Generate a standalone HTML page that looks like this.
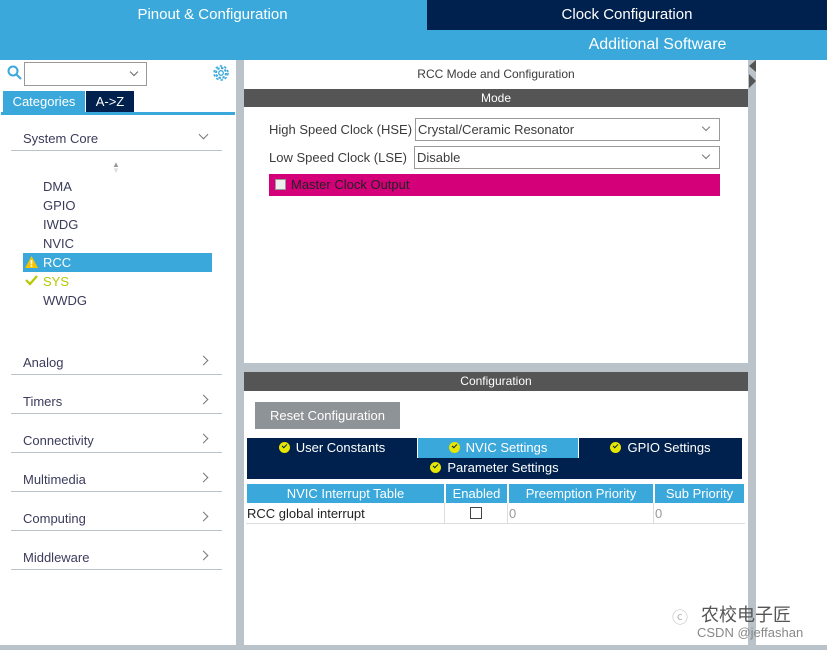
<!DOCTYPE html><html><head><style>
*{margin:0;padding:0;box-sizing:border-box}
body{width:827px;height:650px;position:relative;overflow:hidden;background:#b9c3c9;font-family:"Liberation Sans",sans-serif;font-size:13px;color:#3c3c3c}
.a{position:absolute}
.t{color:#fff;font-size:15px;text-align:center}
.cat{position:absolute;left:11px;width:211px;height:1px;background:#b9c3c9}
.cl{position:absolute;left:23px;font-size:13px;color:#3b3b5b}
.ch{position:absolute;left:200px;width:7px;height:7px;border-right:1px solid #777;border-bottom:1px solid #777;transform:rotate(-45deg)}
.it{position:absolute;left:43px;font-size:13px;color:#3b3b5b}
.tab{position:absolute;height:20px;background:#00214d;color:#fff;font-size:13px;text-align:center;line-height:20px}
.ok{display:inline-block;width:11px;height:11px;border-radius:50%;background:#e6e600;vertical-align:-1px;margin-right:6px;position:relative}
.ok:after{content:"";position:absolute;left:3px;top:2px;width:4px;height:2px;border-left:1.5px solid #00214d;border-bottom:1.5px solid #00214d;transform:rotate(-45deg)}
.th{position:absolute;top:484px;height:19px;background:#3aa8db;color:#fff;text-align:center;line-height:19px;font-size:13px}
</style></head><body>
<div class="a" style="left:0;top:0;width:827px;height:60px;background:#3aa8db"></div>
<div class="a t" style="left:0;top:6px;width:425px">Pinout &amp; Configuration</div>
<div class="a t" style="left:427px;top:0;width:400px;height:30px;background:#00214d;line-height:30px">Clock Configuration</div>
<div class="a t" style="left:560px;top:36px;width:195px;font-size:16px">Additional Software</div>
<div class="a" style="left:0;top:60px;width:236px;height:585px;background:#fff"></div>
<svg class="a" style="left:7px;top:65px" width="16" height="16"><circle cx="6" cy="6" r="4.5" fill="none" stroke="#3aa8db" stroke-width="2"/><path d="M9 9l5 5" stroke="#3aa8db" stroke-width="2"/></svg>
<div class="a" style="left:24px;top:62px;width:123px;height:24px;border:1px solid #999"></div>
<div class="a" style="left:131px;top:69px;width:6px;height:6px;border-right:1px solid #666;border-bottom:1px solid #666;transform:rotate(45deg)"></div>
<svg class="a" style="left:212px;top:64px" width="18" height="18"><circle cx="9" cy="9" r="5" fill="none" stroke="#3aa8db" stroke-width="2" stroke-dasharray="2.5 1.4"/><circle cx="9" cy="9" r="7" fill="none" stroke="#3aa8db" stroke-width="1.5" stroke-dasharray="2.5 2"/><circle cx="9" cy="9" r="2.3" fill="none" stroke="#3aa8db" stroke-width="1.3"/></svg>
<div class="a" style="left:3px;top:91px;width:82px;height:21px;background:#3aa8db;color:#fff;line-height:21px;text-align:center">Categories</div>
<div class="a" style="left:86px;top:91px;width:48px;height:21px;background:#00214d;color:#fff;line-height:21px;text-align:center">A-&gt;Z</div>
<div class="a" style="left:1px;top:112px;width:234px;height:3px;background:#3aa8db"></div>
<div class="cl" style="top:131px">System Core</div><div class="ch" style="top:131px;transform:rotate(45deg)"></div><div class="cat" style="top:150px"></div>
<div class="a" style="left:112px;top:162px;color:#999;font-size:8px;line-height:6px">▲<br><span style="color:#ddd">▼</span></div>
<div class="it" style="top:179px">DMA</div><div class="it" style="top:198px">GPIO</div><div class="it" style="top:217px">IWDG</div><div class="it" style="top:236px">NVIC</div>
<div class="a" style="left:23px;top:253px;width:189px;height:19px;background:#3aa8db"></div>
<svg class="a" style="left:24px;top:255px" width="15" height="14"><path d="M7.5 1L14 13H1z" fill="#f5c400"/><rect x="6.7" y="5" width="1.6" height="4.5" fill="#fff"/><rect x="6.7" y="10.3" width="1.6" height="1.6" fill="#fff"/></svg>
<div class="it" style="top:255px;color:#fff">RCC</div>
<svg class="a" style="left:25px;top:275px" width="13" height="11"><path d="M1 5l4 4 7-8" stroke="#b5c800" stroke-width="2.2" fill="none"/></svg>
<div class="it" style="top:274px;color:#b5c800">SYS</div><div class="it" style="top:293px">WWDG</div>
<div class="cl" style="top:355px">Analog</div><div class="ch" style="top:357px"></div><div class="cat" style="top:374px"></div>
<div class="cl" style="top:394px">Timers</div><div class="ch" style="top:396px"></div><div class="cat" style="top:413px"></div>
<div class="cl" style="top:433px">Connectivity</div><div class="ch" style="top:435px"></div><div class="cat" style="top:452px"></div>
<div class="cl" style="top:472px">Multimedia</div><div class="ch" style="top:474px"></div><div class="cat" style="top:491px"></div>
<div class="cl" style="top:511px">Computing</div><div class="ch" style="top:513px"></div><div class="cat" style="top:530px"></div>
<div class="cl" style="top:550px">Middleware</div><div class="ch" style="top:552px"></div><div class="cat" style="top:569px"></div>
<div class="a" style="left:244px;top:60px;width:504px;height:303px;background:#fff"></div>
<div class="a" style="left:244px;top:67px;width:504px;text-align:center;font-size:12px">RCC Mode and Configuration</div>
<div class="a" style="left:244px;top:89px;width:504px;height:18px;background:#545554;color:#fff;text-align:center;line-height:18px;font-size:12px">Mode</div>
<div class="a" style="left:269px;top:122px">High Speed Clock (HSE)</div>
<div class="a" style="left:415px;top:118px;width:305px;height:23px;border:1px solid #999;padding:3px 2px">Crystal/Ceramic Resonator</div>
<div class="a" style="left:269px;top:150px">Low Speed Clock (LSE)</div>
<div class="a" style="left:414px;top:146px;width:306px;height:23px;border:1px solid #999;padding:3px 2px">Disable</div>
<div class="a" style="left:703px;top:124px;width:6px;height:6px;border-right:1px solid #777;border-bottom:1px solid #777;transform:rotate(45deg)"></div>
<div class="a" style="left:703px;top:152px;width:6px;height:6px;border-right:1px solid #777;border-bottom:1px solid #777;transform:rotate(45deg)"></div>
<div class="a" style="left:269px;top:174px;width:451px;height:22px;background:#d4007a;padding:3px 0 0 6px;color:#222"><span style="display:inline-block;width:11px;height:11px;background:#eee;border:1px solid #999;vertical-align:-1px;margin-right:5px"></span>Master Clock Output</div>
<div class="a" style="left:756px;top:60px;width:71px;height:585px;background:#fff"></div>
<svg class="a" style="left:748px;top:60px" width="8" height="32"><path d="M8 0L1 6 8 12z M1 14l7 7-7 7z" fill="#555"/></svg>
<div class="a" style="left:244px;top:372px;width:504px;height:273px;background:#fff"></div>
<div class="a" style="left:244px;top:372px;width:504px;height:19px;background:#545554;color:#fff;text-align:center;line-height:19px;font-size:12px">Configuration</div>
<div class="a" style="left:255px;top:402px;width:145px;height:27px;background:#8e9398;color:#fff;text-align:center;line-height:27px">Reset Configuration</div>
<div class="tab" style="left:247px;top:438px;width:170px"><span class="ok"></span>User Constants</div>
<div class="tab" style="left:418px;top:438px;width:160px;height:21px;background:#3aa8db"><span class="ok"></span>NVIC Settings</div>
<div class="tab" style="left:579px;top:438px;width:163px"><span class="ok"></span>GPIO Settings</div>
<div class="tab" style="left:247px;top:458px;width:495px;height:21px"><span class="ok"></span>Parameter Settings</div>
<div class="th" style="left:247px;width:197px">NVIC Interrupt Table</div>
<div class="th" style="left:446px;width:61px">Enabled</div>
<div class="th" style="left:509px;width:144px">Preemption Priority</div>
<div class="th" style="left:655px;width:89px">Sub Priority</div>
<div class="a" style="left:246px;top:503px;width:499px;height:21px;border-bottom:1px solid #ddd"></div>
<div class="a" style="left:444px;top:503px;width:1px;height:20px;background:#ddd"></div>
<div class="a" style="left:507px;top:503px;width:1px;height:20px;background:#ddd"></div>
<div class="a" style="left:653px;top:503px;width:1px;height:20px;background:#ddd"></div>
<div class="a" style="left:247px;top:506px;color:#222">RCC global interrupt</div>
<div class="a" style="left:470px;top:507px;width:12px;height:12px;border:1px solid #444"></div>
<div class="a" style="left:509px;top:506px;color:#999">0</div>
<div class="a" style="left:655px;top:506px;color:#999">0</div>
<div class="a" style="left:701px;top:601px;color:#555;font-size:18px;font-family:'Noto Sans CJK SC',sans-serif">农校电子匠</div>
<div class="a" style="left:672px;top:604px;color:#bbb;font-size:16px">ⓒ</div>
<div class="a" style="left:697px;top:625px;color:#888;font-size:13px">CSDN @jeffashan</div>
</body></html>
